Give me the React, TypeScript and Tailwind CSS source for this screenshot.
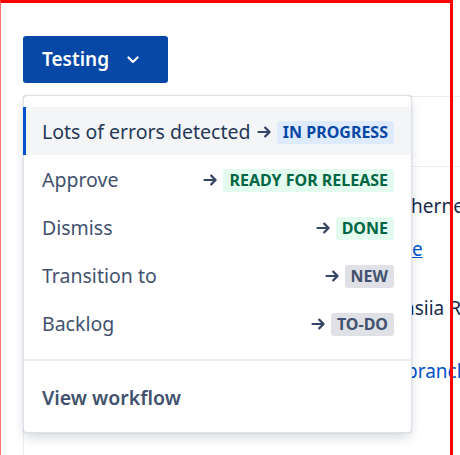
import React from "react";

type Item = {
  label: string;
  status: string;
  tone: "blue" | "green" | "gray";
  active?: boolean;
};

const items: Item[] = [
  { label: "Lots of errors detected", status: "In progress", tone: "blue", active: true },
  { label: "Approve", status: "Ready for release", tone: "green" },
  { label: "Dismiss", status: "Done", tone: "green" },
  { label: "Transition to", status: "New", tone: "gray" },
  { label: "Backlog", status: "To-do", tone: "gray" },
];

const toneClass = {
  blue: "bg-[#DEEBFF] text-[#0747A6]",
  green: "bg-[#E3FCEF] text-[#006644]",
  gray: "bg-[#DFE1E6] text-[#42526E]",
};

const Arrow = () => (
  <svg width="15" height="14" viewBox="0 0 15 14" fill="none" className="shrink-0">
    <path d="M1.5 7h11M8.2 2.6 12.6 7l-4.4 4.4" stroke="#344563" strokeWidth="2.2" strokeLinecap="round" strokeLinejoin="round" />
  </svg>
);

const Lozenge = ({ text, tone }: { text: string; tone: Item["tone"] }) => (
  <span
    className={`inline-flex h-[23px] items-center rounded-[3px] px-[6px] text-[16px] font-bold uppercase leading-none whitespace-nowrap ${toneClass[tone]}`}
  >
    {text}
  </span>
);

export default function App() {
  return (
    <div
      className="relative h-[455px] w-[460px] overflow-hidden bg-white"
      style={{ fontFamily: '"Noto Sans", "Open Sans", sans-serif' }}
    >
      {/* trigger */}
      <div className="pl-[23px] pt-[36px]">
        <button className="flex h-[47px] w-[145px] items-center rounded-[3px] bg-[#0747A6] pl-[19px] text-[19px] font-semibold text-white">
          Testing
          <svg width="12" height="8" viewBox="0 0 12 8" fill="none" className="ml-[18px]">
            <path d="M1.5 1.5 6 6l4.5-4.5" stroke="white" strokeWidth="2.2" strokeLinecap="round" strokeLinejoin="round" />
          </svg>
        </button>
      </div>

      {/* page content behind the menu */}
      <div className="ml-[23px] mt-[13px] h-[400px] border-l border-t border-[#EBECF0] text-[19px] leading-[24px] whitespace-nowrap">
        <div className="h-[70px] border-b border-[#EBECF0]" />
        <div className="mt-[27px] pl-[378px] text-[#172B4D]">cherne</div>
        <div className="mt-[19px] pl-[383px] text-[#0052CC] underline">le</div>
        <div className="mt-[35px] pl-[380px] text-[#172B4D]">asiia R</div>
        <div className="mt-[39px] pl-[382px] text-[#0052CC]">branch</div>
      </div>

      {/* dropdown menu */}
      <div className="absolute left-[23px] top-[95px] w-[389px] rounded-[4px] border border-[#DFE1E6] bg-white shadow-[0_6px_12px_-2px_rgba(9,30,66,0.18),0_0_1px_rgba(9,30,66,0.25)]">
        <div className="pt-[11px] pb-[12px]">
          {items.map((it) => (
            <div
              key={it.label}
              className={`relative flex h-[48px] items-center justify-between pl-[18px] pr-[17px] pt-[2px] text-[19.5px] ${
                it.active ? "bg-[#F4F5F7] text-[#253858]" : "text-[#42526E]"
              }`}
            >
              {it.active && <span className="absolute bottom-0 left-[-1px] top-0 w-[3px] bg-[#0052CC]" />}
              <span className="whitespace-nowrap">{it.label}</span>
              <span className="flex items-center gap-[5px]">
                <Arrow />
                <Lozenge text={it.status} tone={it.tone} />
              </span>
            </div>
          ))}
        </div>
        <div className="h-[2px] bg-[#EBECF0]" />
        <div className="flex h-[71px] items-center pl-[18px] pt-[2px] text-[19.5px] font-semibold text-[#42526E]">View workflow</div>
      </div>

      {/* annotation frame */}
      <div className="pointer-events-none absolute left-0 top-0 h-[470px] w-[453px] border-l border-r-[3px] border-t-[3px] border-l-[#FF7070] border-r-[#FF0000] border-t-[#FF0000]" />
    </div>
  );
}
